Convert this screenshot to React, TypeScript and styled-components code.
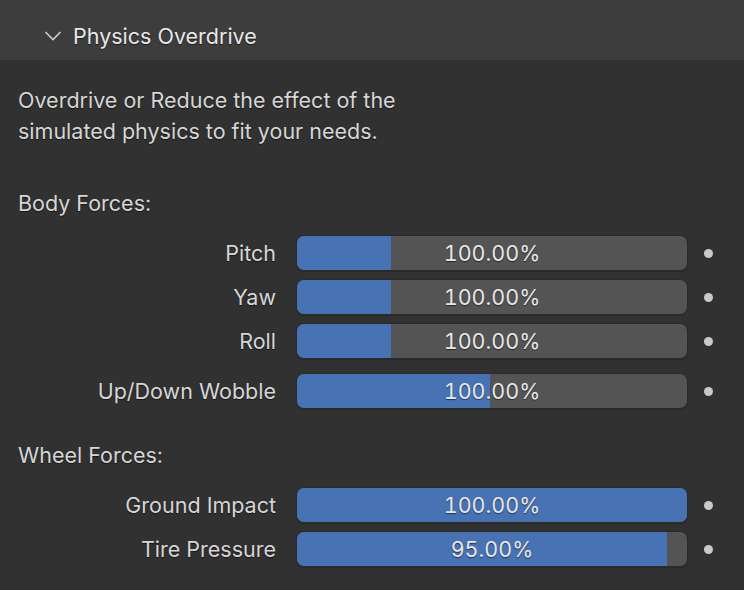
import styled, { createGlobalStyle } from 'styled-components';

const GlobalStyle = createGlobalStyle`
    html, body {
        margin: 0;
        background: #313131;
    }
    body {
        font-family: Inter, "Noto Sans", "DejaVu Sans", sans-serif;
    }
`;

const Panel = styled.main`
    width: 744px;
    height: 590px;
    background: #313131;
    overflow: hidden;
`;

const Header = styled.header`
    height: 60px;
    background: #3d3d3d;
    display: flex;
    align-items: center;
    padding: 12px 0 0 44px;
    gap: 11px;
    box-sizing: border-box;
`;

const Title = styled.h2`
    margin: 0;
    font-size: 21.5px;
    font-weight: 400;
    color: #e8e8e8;
    text-shadow: 0 1px 1px rgba(0, 0, 0, 0.55);
`;

const Body = styled.section`
    padding: 25px 18px 0 18px;
`;

const Text = styled.p`
    margin: 0;
    font-size: 21.5px;
    line-height: 31px;
    color: #d6d6d6;
    text-shadow: 0 1px 1px rgba(0, 0, 0, 0.55);
`;

const GroupLabel = styled(Text)<{ $top: number }>`
    margin-top: ${p => p.$top}px;
`;

const Rows = styled.div<{ $top: number }>`
    margin-top: ${p => p.$top}px;
    display: grid;
    grid-template-columns: 258px 392px 30px;
    column-gap: 20px;
    row-gap: 8px;
    align-items: center;
`;

const Label = styled.span<{ $gap?: boolean }>`
    text-align: right;
    font-size: 21.5px;
    color: #d6d6d6;
    text-shadow: 0 1px 1px rgba(0, 0, 0, 0.55);
    margin-top: ${p => (p.$gap ? '6px' : '0')};
`;

const Track = styled.div<{ $gap?: boolean }>`
    position: relative;
    height: 36px;
    box-sizing: border-box;
    border: 1px solid #2a2a2a;
    border-radius: 8px;
    background: #545454;
    overflow: hidden;
    box-shadow: 0 1px 0 #282828;
    margin-top: ${p => (p.$gap ? '6px' : '0')};
`;

const Fill = styled.div`
    position: absolute;
    left: 0;
    top: 0;
    bottom: 0;
    background: #4772b3;
`;

const Value = styled.span`
    position: relative;
    display: flex;
    height: 100%;
    align-items: center;
    justify-content: center;
    font-size: 21.5px;
    font-variant-numeric: tabular-nums;
    color: #e8e8e8;
    text-shadow: 0 1px 1px rgba(0, 0, 0, 0.55);
`;

const Dot = styled.span<{ $gap?: boolean }>`
    justify-self: start;
    margin-left: -4px;
    width: 9px;
    height: 9px;
    border-radius: 50%;
    background: #c9c9c9;
    margin-top: ${p => (p.$gap ? '6px' : '0')};
`;

type Prop = { label: string; value: string; fill: number; gap?: boolean };

const bodyForces: Prop[] = [
    { label: 'Pitch', value: '100.00%', fill: 0.24 },
    { label: 'Yaw', value: '100.00%', fill: 0.24 },
    { label: 'Roll', value: '100.00%', fill: 0.24 },
    { label: 'Up/Down Wobble', value: '100.00%', fill: 0.495, gap: true },
];

const wheelForces: Prop[] = [
    { label: 'Ground Impact', value: '100.00%', fill: 1 },
    { label: 'Tire Pressure', value: '95.00%', fill: 0.948 },
];

function Slider({ label, value, fill, gap }: Prop) {
    return (
        <>
            <Label $gap={gap}>{label}</Label>
            <Track $gap={gap}>
                <Fill style={{ width: `${fill * 100}%` }} />
                <Value>{value}</Value>
            </Track>
            <Dot $gap={gap} />
        </>
    );
}

export default function App() {
    return (
        <Panel>
            <GlobalStyle />
            <Header>
                <svg width="18" height="18" viewBox="0 0 18 18">
                    <path d="M1.5 5 L9 12.5 L16.5 5" fill="none" stroke="#cfcfcf" strokeWidth="1.6" />
                </svg>
                <Title>Physics Overdrive</Title>
            </Header>
            <Body>
                <Text>
                    Overdrive or Reduce the effect of the
                    <br />
                    simulated physics to fit your needs.
                </Text>
                <GroupLabel $top={41}>Body Forces:</GroupLabel>
                <Rows $top={16}>
                    {bodyForces.map(p => <Slider key={p.label} {...p} />)}
                </Rows>
                <GroupLabel $top={31}>Wheel Forces:</GroupLabel>
                <Rows $top={16}>
                    {wheelForces.map(p => <Slider key={p.label} {...p} />)}
                </Rows>
            </Body>
        </Panel>
    );
}
